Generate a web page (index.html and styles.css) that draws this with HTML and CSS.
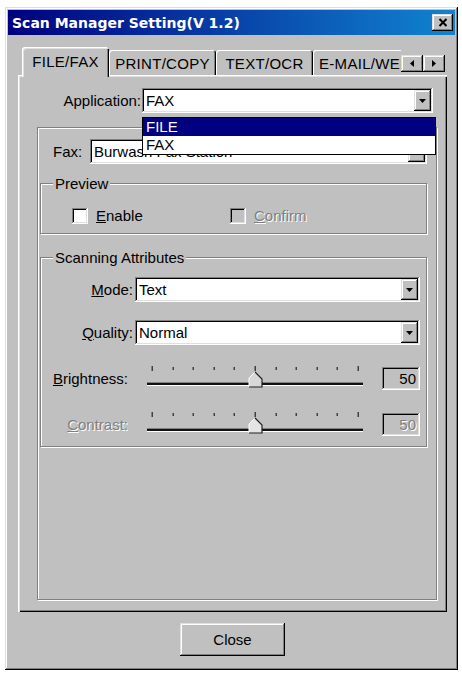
FILE: index.html
```html
<!DOCTYPE html>
<html>
<head>
<meta charset="utf-8">
<title>Scan Manager Setting</title>
<link rel="stylesheet" href="styles.css">
</head>
<body>
<div class="window">
  <div class="titlebar">
    <span class="title">Scan Manager Setting(V 1.2)</span>
    <div class="tbtn raised"><svg width="10" height="9" viewBox="0 0 10 9"><path d="M1.5 1 L8.5 8 M8.5 1 L1.5 8" stroke="#000" stroke-width="2"/></svg></div>
  </div>
  <div class="client">
    <div class="tabstrip">
      <div class="tabs">
        <div class="tab sel t1">FILE/FAX</div>
        <div class="tab t2">PRINT/COPY</div>
        <div class="tab t3">TEXT/OCR</div>
        <div class="tab t4">E-MAIL/WEB</div>
      </div>
      <div class="arrows">
        <div class="arr raised"><svg width="4" height="7" viewBox="0 0 4 7"><path d="M4 0 L0 3.5 L4 7 Z" fill="#000"/></svg></div>
        <div class="arr raised"><svg width="4" height="7" viewBox="0 0 4 7"><path d="M0 0 L4 3.5 L0 7 Z" fill="#000"/></svg></div>
      </div>
    </div>
    <div class="panel">
      <div class="approw">
        <span class="lbl">Application:</span>
        <div class="combowrap">
          <div class="combo sunken app">
            <span class="txt">FAX</span>
            <div class="ddbtn raised"><svg width="7" height="4" viewBox="0 0 7 4"><path d="M0 0 L7 0 L3.5 4 Z" fill="#000"/></svg></div>
          </div>
          <div class="droplist">
            <div class="opt hl">FILE</div>
            <div class="opt">FAX</div>
          </div>
        </div>
      </div>
      <div class="frame">
        <div class="faxrow">
          <span class="faxlbl">Fax:</span>
          <div class="combo sunken fax">
            <span class="txt">Burwash Fax Station</span>
            <div class="ddbtn raised"><svg width="7" height="4" viewBox="0 0 7 4"><path d="M0 0 L7 0 L3.5 4 Z" fill="#000"/></svg></div>
          </div>
        </div>
        <div class="group preview">
          <span class="legend">Preview</span>
          <div class="chkrow">
            <div class="chk first"><div class="cb sunken"></div><span><u>E</u>nable</span></div>
            <div class="chk"><div class="cb sunken dis"></div><span class="disabled"><u>C</u>onfirm</span></div>
          </div>
        </div>
        <div class="group scan">
          <span class="legend">Scanning Attributes</span>
          <div class="srow">
            <span class="slbl"><u>M</u>ode:</span>
            <div class="combo sunken grow">
              <span class="txt">Text</span>
              <div class="ddbtn raised"><svg width="7" height="4" viewBox="0 0 7 4"><path d="M0 0 L7 0 L3.5 4 Z" fill="#000"/></svg></div>
            </div>
          </div>
          <div class="srow gap18">
            <span class="slbl"><u>Q</u>uality:</span>
            <div class="combo sunken grow">
              <span class="txt">Normal</span>
              <div class="ddbtn raised"><svg width="7" height="4" viewBox="0 0 7 4"><path d="M0 0 L7 0 L3.5 4 Z" fill="#000"/></svg></div>
            </div>
          </div>
          <div class="srow slrow gap21">
            <span class="blbl"><u>B</u>rightness:</span>
            <svg class="slider" width="220" height="24" viewBox="0 0 220 24">
              <g fill="#404040">
                <rect x="6.5" y="0" width="1.5" height="5"/>
                <rect x="27.5" y="1" width="1.5" height="3"/>
                <rect x="47.5" y="1" width="1.5" height="3"/>
                <rect x="68.5" y="1" width="1.5" height="3"/>
                <rect x="88.5" y="1" width="1.5" height="3"/>
                <rect x="109.5" y="0" width="1.5" height="5"/>
                <rect x="130.5" y="1" width="1.5" height="3"/>
                <rect x="150.5" y="1" width="1.5" height="3"/>
                <rect x="171.5" y="1" width="1.5" height="3"/>
                <rect x="191.5" y="1" width="1.5" height="3"/>
                <rect x="212.5" y="0" width="1.5" height="5"/>
              </g>
              <rect x="2" y="16" width="216" height="1" fill="#808080"/>
              <rect x="2" y="17" width="216" height="2" fill="#101010"/>
              <rect x="2" y="19" width="216" height="1" fill="#ffffff"/>
              <polygon points="104,21 104,12 110,6 117,13 117,21" fill="#d8d8d8"/>
              <polyline points="104,21 104,12 110,6" fill="none" stroke="#ffffff" stroke-width="1"/>
              <polyline points="110,6 117,13 117,21 104,21" fill="none" stroke="#202020" stroke-width="1.2"/>
            </svg>
            <div class="valbox sunken">50</div>
          </div>
          <div class="srow slrow gap22">
            <span class="blbl disabled"><u>C</u>ontrast:</span>
            <svg class="slider" width="220" height="24" viewBox="0 0 220 24">
              <g fill="#404040">
                <rect x="6.5" y="0" width="1.5" height="5"/>
                <rect x="27.5" y="1" width="1.5" height="3"/>
                <rect x="47.5" y="1" width="1.5" height="3"/>
                <rect x="68.5" y="1" width="1.5" height="3"/>
                <rect x="88.5" y="1" width="1.5" height="3"/>
                <rect x="109.5" y="0" width="1.5" height="5"/>
                <rect x="130.5" y="1" width="1.5" height="3"/>
                <rect x="150.5" y="1" width="1.5" height="3"/>
                <rect x="171.5" y="1" width="1.5" height="3"/>
                <rect x="191.5" y="1" width="1.5" height="3"/>
                <rect x="212.5" y="0" width="1.5" height="5"/>
              </g>
              <rect x="2" y="16" width="216" height="1" fill="#808080"/>
              <rect x="2" y="17" width="216" height="2" fill="#101010"/>
              <rect x="2" y="19" width="216" height="1" fill="#ffffff"/>
              <polygon points="104,21 104,12 110,6 117,13 117,21" fill="#e4e4e4"/>
              <polyline points="104,21 104,12 110,6" fill="none" stroke="#ffffff" stroke-width="1"/>
              <polyline points="110,6 117,13 117,21 104,21" fill="none" stroke="#202020" stroke-width="1.2"/>
            </svg>
            <div class="valbox sunken disabled">50</div>
          </div>
        </div>
      </div>
    </div>
    <div class="footer">
      <div class="btn raised">Close</div>
    </div>
  </div>
</div>
</body>
</html>
```

FILE: styles.css
```css
html, body {
  margin: 0;
  padding: 0;
  background: #ffffff;
}
body {
  font-family: "Liberation Sans", Arial, sans-serif;
  font-size: 15px;
  color: #000;
}
.raised {
  background: #c0c0c0;
  box-shadow: inset -1px -1px #000, inset 1px 1px #dfdfdf, inset -2px -2px #808080, inset 2px 2px #ffffff;
}
.sunken {
  box-shadow: inset -1px -1px #ffffff, inset 1px 1px #808080, inset -2px -2px #dfdfdf, inset 2px 2px #000;
}
.disabled {
  color: #808080;
  text-shadow: 1px 1px 0 #ffffff;
}
.window {
  margin: 7px 0 0 5px;
  width: 453px;
  height: 663px;
  box-sizing: border-box;
  padding: 3px;
  background: #c0c0c0;
  box-shadow: inset -1px -1px #000, inset 1px 1px #dfdfdf, inset -2px -2px #808080, inset 2px 2px #ffffff;
  display: flex;
  flex-direction: column;
}
.titlebar {
  height: 25px;
  flex: none;
  background: linear-gradient(to right, #000080, #1084d0);
  display: flex;
  align-items: center;
  justify-content: space-between;
  padding: 0 2px 0 4px;
}
.title {
  font-family: "DejaVu Sans", sans-serif;
  font-weight: bold;
  font-size: 14px;
  color: #ffffff;
  white-space: nowrap;
}
.tbtn {
  width: 21px;
  height: 17px;
  display: flex;
  align-items: center;
  justify-content: center;
}
.client {
  flex: 1;
  display: flex;
  flex-direction: column;
  padding: 12px 8px 0 10px;
}
.tabstrip {
  display: flex;
  height: 30px;
  flex: none;
  margin-bottom: -2px;
  position: relative;
  z-index: 1;
}
.tabs {
  flex: 1;
  display: flex;
  align-items: flex-end;
  overflow: hidden;
  padding-left: 4px;
}
.tab {
  flex: none;
  height: 25px;
  margin-bottom: 2px;
  box-sizing: border-box;
  display: flex;
  align-items: center;
  justify-content: center;
  background: #c0c0c0;
  border-radius: 3px 3px 0 0;
  box-shadow: inset 1px 1px #ffffff, inset -1px 0 #000, inset -2px 0 #808080;
  letter-spacing: 0.3px;
  white-space: nowrap;
  padding-top: 1px;
}
.tab.sel {
  height: 30px;
  margin-bottom: 0;
  padding-top: 0;
  padding-bottom: 1px;
  position: relative;
  z-index: 2;
  box-shadow: inset 1px 1px #ffffff, inset 2px 2px #dfdfdf, inset -1px 0 #000, inset -2px 0 #808080;
}
.t1 { width: 87px; }
.t2 { width: 107px; }
.t3 { width: 97px; }
.t4 { width: 110px; justify-content: flex-start; padding-left: 6px; }
.arrows {
  display: flex;
  align-self: flex-end;
  margin: 0 2px 5px 0;
}
.arr {
  width: 22px;
  height: 17px;
  display: flex;
  align-items: center;
  justify-content: center;
}
.panel {
  flex: none;
  height: 537px;
  box-sizing: border-box;
  padding: 13px 14px 12px 19px;
  box-shadow: inset 1px 1px #ffffff, inset 2px 2px #dfdfdf, inset -1px -1px #000, inset -2px -2px #808080;
  display: flex;
  flex-direction: column;
}
.approw {
  display: flex;
  justify-content: flex-end;
  align-items: center;
  gap: 1px;
}
.combowrap {
  position: relative;
}
.combo {
  height: 25px;
  box-sizing: border-box;
  background: #ffffff;
  display: flex;
  align-items: center;
  padding-left: 4px;
}
.combo .txt {
  flex: 1;
  white-space: nowrap;
  overflow: hidden;
}
.combo.app { width: 291px; }
.combo.fax { flex: 1; }
.combo.grow { flex: 1; }
.ddbtn {
  flex: none;
  width: 17px;
  height: 21px;
  margin-right: 2px;
  display: flex;
  align-items: center;
  justify-content: center;
}
.droplist {
  position: absolute;
  top: 29px;
  left: 0;
  width: 294px;
  box-sizing: border-box;
  border: 1px solid #000;
  background: #ffffff;
  z-index: 5;
}
.opt {
  height: 18px;
  line-height: 18px;
  padding-left: 3px;
}
.opt.hl {
  background: #000080;
  color: #ffffff;
}
.frame {
  flex: 1;
  margin: 14px -4px 0 0;
  border: 1px solid #808080;
  box-shadow: inset 1px 1px #ffffff, 1px 1px #ffffff;
  padding: 11px 9px 0 2px;
  display: flex;
  flex-direction: column;
}
.faxrow {
  display: flex;
  align-items: center;
  padding-left: 13px;
}
.faxlbl {
  width: 37px;
  flex: none;
}
.group {
  position: relative;
  border: 1px solid #808080;
  box-shadow: inset 1px 1px #ffffff, 1px 1px #ffffff;
  box-sizing: border-box;
}
.legend {
  position: absolute;
  top: -9px;
  left: 12px;
  padding: 0 2px;
  background: #c0c0c0;
  line-height: 17px;
}
.preview {
  margin-top: 19px;
  height: 51px;
  padding: 23px 0 0 31px;
}
.chkrow {
  display: flex;
  align-items: center;
}
.chk {
  display: flex;
  align-items: center;
  gap: 8px;
}
.chk.first {
  width: 158px;
}
.cb {
  width: 16px;
  height: 16px;
  background: #ffffff;
}
.cb.dis {
  background: #c0c0c0;
}
.scan {
  margin-top: 23px;
  height: 190px;
  padding: 19px 6px 0 0;
}
.srow {
  display: flex;
  align-items: center;
}
.gap18 { margin-top: 18px; }
.gap21 { margin-top: 21px; }
.gap22 { margin-top: 22px; }
.slbl {
  width: 92px;
  flex: none;
  text-align: right;
  margin-right: 2px;
}
.slrow {
  height: 24px;
}
.blbl {
  width: 87px;
  flex: none;
  text-align: right;
}
.slider {
  flex: none;
  margin-left: 17px;
  display: block;
}
.valbox {
  width: 38px;
  height: 23px;
  margin-left: 17px;
  box-sizing: border-box;
  background: #c0c0c0;
  text-align: right;
  padding-right: 4px;
  line-height: 23px;
}
.footer {
  display: flex;
  justify-content: center;
  margin-top: 11px;
}
.btn {
  width: 105px;
  height: 33px;
  display: flex;
  align-items: center;
  justify-content: center;
}
```
